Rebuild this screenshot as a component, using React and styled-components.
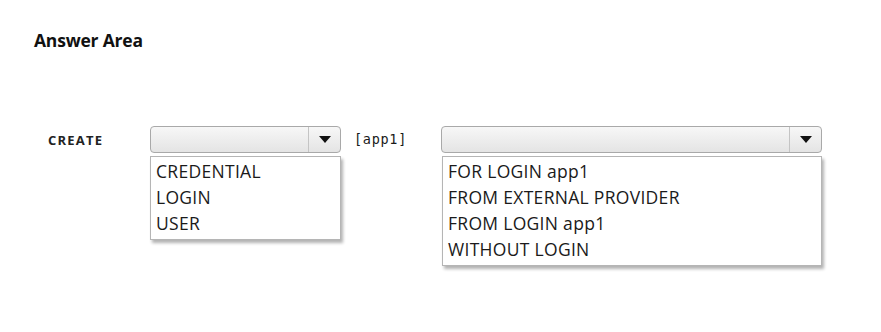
import React from "react";
import styled, { createGlobalStyle } from "styled-components";

const Global = createGlobalStyle`
  html, body { margin: 0; padding: 0; background: #ffffff; }
  body { font-family: "Open Sans", "Noto Sans", sans-serif; color: #1a1a1a; }
`;

const Page = styled.div`
  width: 881px;
  height: 332px;
  box-sizing: border-box;
  padding: 28px 0 0 34px;
  background: #fff;
`;

const Title = styled.h1`
  margin: 0;
  font-family: "Open Sans", sans-serif;
  font-weight: 700;
  font-size: 17.5px;
  letter-spacing: -0.2px;
  line-height: 24px;
  color: #111;
`;

const Row = styled.div`
  display: flex;
  align-items: flex-start;
  margin-top: 74px;
  padding-left: 14px;
`;

const Label = styled.span`
  width: 102px;
  font-family: "Open Sans", sans-serif;
  font-weight: 700;
  font-size: 13px;
  letter-spacing: 1.2px;
  line-height: 28px;
  color: #222;
`;

const Mono = styled.span`
  width: 53px;
  margin: 0 34px 0 13px;
  font-family: "DejaVu Sans Mono", monospace;
  font-size: 13.5px;
  letter-spacing: 0.7px;
  line-height: 27px;
  white-space: nowrap;
  color: #1a1a1a;
`;

const Dropdown = styled.div`
  display: flex;
  flex-direction: column;
  width: ${(p) => p.$w}px;
`;

const Select = styled.div`
  display: flex;
  height: 27px;
  box-sizing: border-box;
  border: 1px solid #a9a9a9;
  border-radius: 4px;
  background: linear-gradient(#f7f7f7, #e4e4e4);
`;

const SelectBody = styled.div`
  flex: 1;
`;

const ArrowBox = styled.div`
  width: 31px;
  border-left: 1px solid #c4c4c4;
  display: flex;
  align-items: center;
  justify-content: center;
`;

const List = styled.ul`
  list-style: none;
  margin: 3px 0 0 ${(p) => p.$inset}px;
  padding: 1px 0 3px 5px;
  border: 1px solid #b5b5b5;
  background: #fff;
  box-shadow: 2px 3px 3px rgba(0, 0, 0, 0.3);
`;

const Item = styled.li`
  font-family: "Open Sans", sans-serif;
  font-size: 17.5px;
  letter-spacing: 0.3px;
  line-height: 26px;
  color: #1a1a1a;
`;

const Arrow = () => (
  <svg width="12" height="7" viewBox="0 0 12 7">
    <polygon points="0,0 12,0 6,7" fill="#111" />
  </svg>
);

const Drop = ({ w, inset = 0, items }) => (
  <Dropdown $w={w}>
    <Select>
      <SelectBody />
      <ArrowBox>
        <Arrow />
      </ArrowBox>
    </Select>
    <List $inset={inset}>
      {items.map((t) => (
        <Item key={t}>{t}</Item>
      ))}
    </List>
  </Dropdown>
);

export default function App() {
  return (
    <Page>
      <Global />
      <Title>Answer Area</Title>
      <Row>
        <Label>CREATE</Label>
        <Drop w={191} items={["CREDENTIAL", "LOGIN", "USER"]} />
        <Mono>[app1]</Mono>
        <Drop
          w={381}
          inset={1}
          items={["FOR LOGIN app1", "FROM EXTERNAL PROVIDER", "FROM LOGIN app1", "WITHOUT LOGIN"]}
        />
      </Row>
    </Page>
  );
}
